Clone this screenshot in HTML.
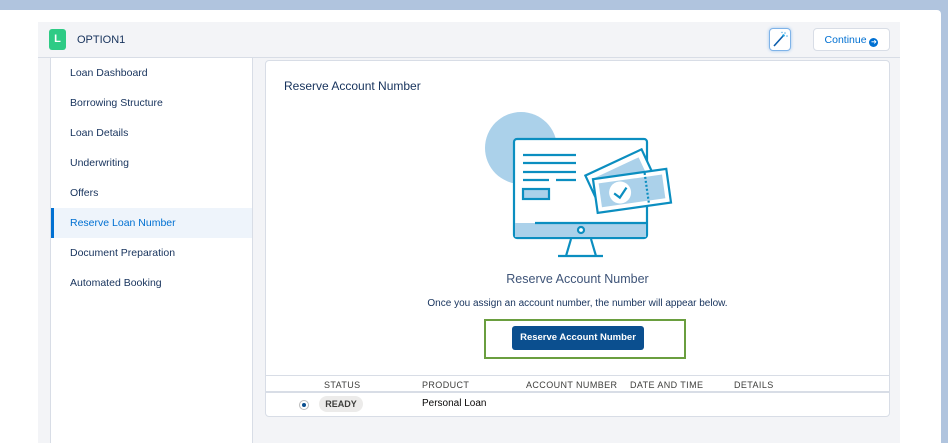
<!DOCTYPE html>
<html><head><meta charset="utf-8"><style>
*{box-sizing:border-box;margin:0;padding:0}
html,body{width:948px;height:443px;overflow:hidden}
body{background:#b0c4de;font-family:"Liberation Sans",sans-serif;position:relative;color:#080707}
.page{position:absolute;left:0;top:10px;width:941px;height:433px;background:#fff;border-radius:0 4px 0 0}
.wrap{position:absolute;left:38px;top:22px;width:862px;height:421px;background:#f3f4f7}
.hdr{position:absolute;left:0;top:0;width:862px;height:36px;border-bottom:1px solid #d8dde6}
.av{position:absolute;left:11px;top:7px;width:17px;height:21px;background:#2ecb85;border-radius:3px;color:#fff;font-size:11px;font-weight:bold;text-align:center;line-height:21px}
.ttl{position:absolute;left:39px;top:12px;font-size:11px;color:#16325c}
.wand{position:absolute;left:731px;top:6px;width:22px;height:23px;border:1px solid #7fb3e8;border-radius:4px;background:#fff;box-shadow:0 0 3px #9cc6f0}
.cont{position:absolute;left:775px;top:6px;width:77px;height:23px;border:1px solid #d8dde6;border-radius:4px;background:#fff;color:#0070d2;font-size:10.5px;text-align:center;line-height:22px}
.side{position:absolute;left:12px;top:36px;width:203px;height:400px;background:#fff;border-right:1px solid #d8dde6;border-left:1px solid #d8dde6}
.side div{height:30px;line-height:30px;padding-left:19px;font-size:10.5px;color:#16325c}
.side .act{background:#eef4fb;color:#0070d2;border-left:3px solid #0070d2;padding-left:16px}
.card{position:absolute;left:227px;top:38px;width:625px;height:357px;background:#fff;border:1px solid #d8dde6;border-radius:4px}
.ct{position:absolute;left:18px;top:18px;font-size:12px;color:#16325c}
.t1{position:absolute;left:0;width:100%;top:211px;text-align:center;font-size:12.5px;color:#3e5478}
.t2{position:absolute;left:0;width:100%;top:237px;text-align:center;font-size:10px;color:#16325c}
.gb{position:absolute;left:218px;top:258px;width:202px;height:40px;border:2px solid #6a9e3f}
.btn{position:absolute;left:26px;top:5px;width:132px;height:24px;background:#0b4f8f;border-radius:3px;color:#fff;font-size:9.5px;font-weight:bold;text-align:center;line-height:24px}
.th{position:absolute;left:0;top:314px;width:623px;height:18px;border-top:1px solid #d8dde6;border-bottom:2px solid #d8dde6;font-size:9px;color:#3e3e3c;letter-spacing:.4px}
.th span,.tr span{position:absolute;top:4px}
.tr{position:absolute;left:0;top:332px;width:623px;height:24px;font-size:10px}
.rad{position:absolute;left:33px;top:7px;width:10px;height:10px;border:1px solid #bbb;border-radius:50%}
.rad:after{content:"";position:absolute;left:2px;top:2px;width:4px;height:4px;background:#0b4f8f;border-radius:50%}
.pill{position:absolute;left:53px;top:3px;width:44px;height:16px;background:#ecebea;border-radius:8px;font-size:9px;font-weight:bold;text-align:center;line-height:16px;color:#3e3e3c}
</style></head><body>
<div class="page"></div>
<div class="wrap">
 <div class="hdr"><div class="av">L</div><div class="ttl">OPTION1</div>
  <div class="wand"><svg width="20" height="21" viewBox="0 0 20 21"><path d="M4 17 L13 7" stroke="#0b5cab" stroke-width="1.6"/><path d="M12 6l2-1 1 2-2 1z" fill="#1ba1e2"/><circle cx="15" cy="4" r=".8" fill="#5ab0e8"/><circle cx="17" cy="7" r=".8" fill="#5ab0e8"/><circle cx="12" cy="3.5" r=".7" fill="#5ab0e8"/></svg></div>
  <div class="cont">Continue <span style="display:inline-block;width:9px;height:9px;border-radius:50%;background:#0070d2;color:#fff;font-size:7px;line-height:9px;vertical-align:-1px">➜</span></div>
 </div>
 <div class="side">
  <div>Loan Dashboard</div><div>Borrowing Structure</div><div>Loan Details</div><div>Underwriting</div><div>Offers</div>
  <div class="act">Reserve Loan Number</div><div>Document Preparation</div><div>Automated Booking</div>
 </div>
 <div class="card">
  <div class="ct">Reserve Account Number</div>
  <svg style="position:absolute;left:0;top:0" width="625" height="210">
   <g transform="translate(-265,-60)" fill="none" stroke="#0b8ec0" stroke-width="2.2">
    <circle cx="520" cy="147" r="36" fill="#abd1ea" stroke="none"/>
    <rect x="513" y="138" width="133" height="99" rx="3" fill="#fff"/>
    <rect x="514" y="222" width="131" height="14" fill="#abd1ea" stroke="none"/>
    <line x1="534" y1="222" x2="645" y2="222"/>
    <circle cx="580" cy="229" r="3" fill="#fff"/>
    <path d="M570 238 L565 255 M590 238 L595 255 M557 255 L602 255"/>
    <path d="M522 154H575M522 162H575M522 171H575M522 179H548M555 179H575"/>
    <rect x="522" y="188" width="26" height="10" fill="#abd1ea"/>
    <g transform="rotate(-25 620 180)"><rect x="590" y="160" width="62" height="40" fill="#fff"/><rect x="596" y="166" width="50" height="28" fill="#abd1ea" stroke="none"/></g>
    <g transform="rotate(-8 630 190)"><rect x="594" y="173" width="74" height="34" fill="#fff"/><rect x="599" y="178" width="64" height="24" fill="#abd1ea" stroke="none"/><line x1="646" y1="174" x2="646" y2="206" stroke-dasharray="2 2"/><circle cx="619" cy="190" r="11" fill="#fff" stroke="none"/><path d="M613 190l5 5 8-9"/></g>
   </g>
  </svg>
  <div class="t1">Reserve Account Number</div>
  <div class="t2">Once you assign an account number, the number will appear below.</div>
  <div class="gb"><div class="btn">Reserve Account Number</div></div>
  <div class="th"><span style="left:58px">STATUS</span><span style="left:156px">PRODUCT</span><span style="left:260px">ACCOUNT NUMBER</span><span style="left:364px">DATE AND TIME</span><span style="left:468px">DETAILS</span></div>
  <div class="tr"><div class="rad"></div><div class="pill">READY</div><span style="left:156px;top:5px">Personal Loan</span></div>
 </div>
</div>
</body></html>
